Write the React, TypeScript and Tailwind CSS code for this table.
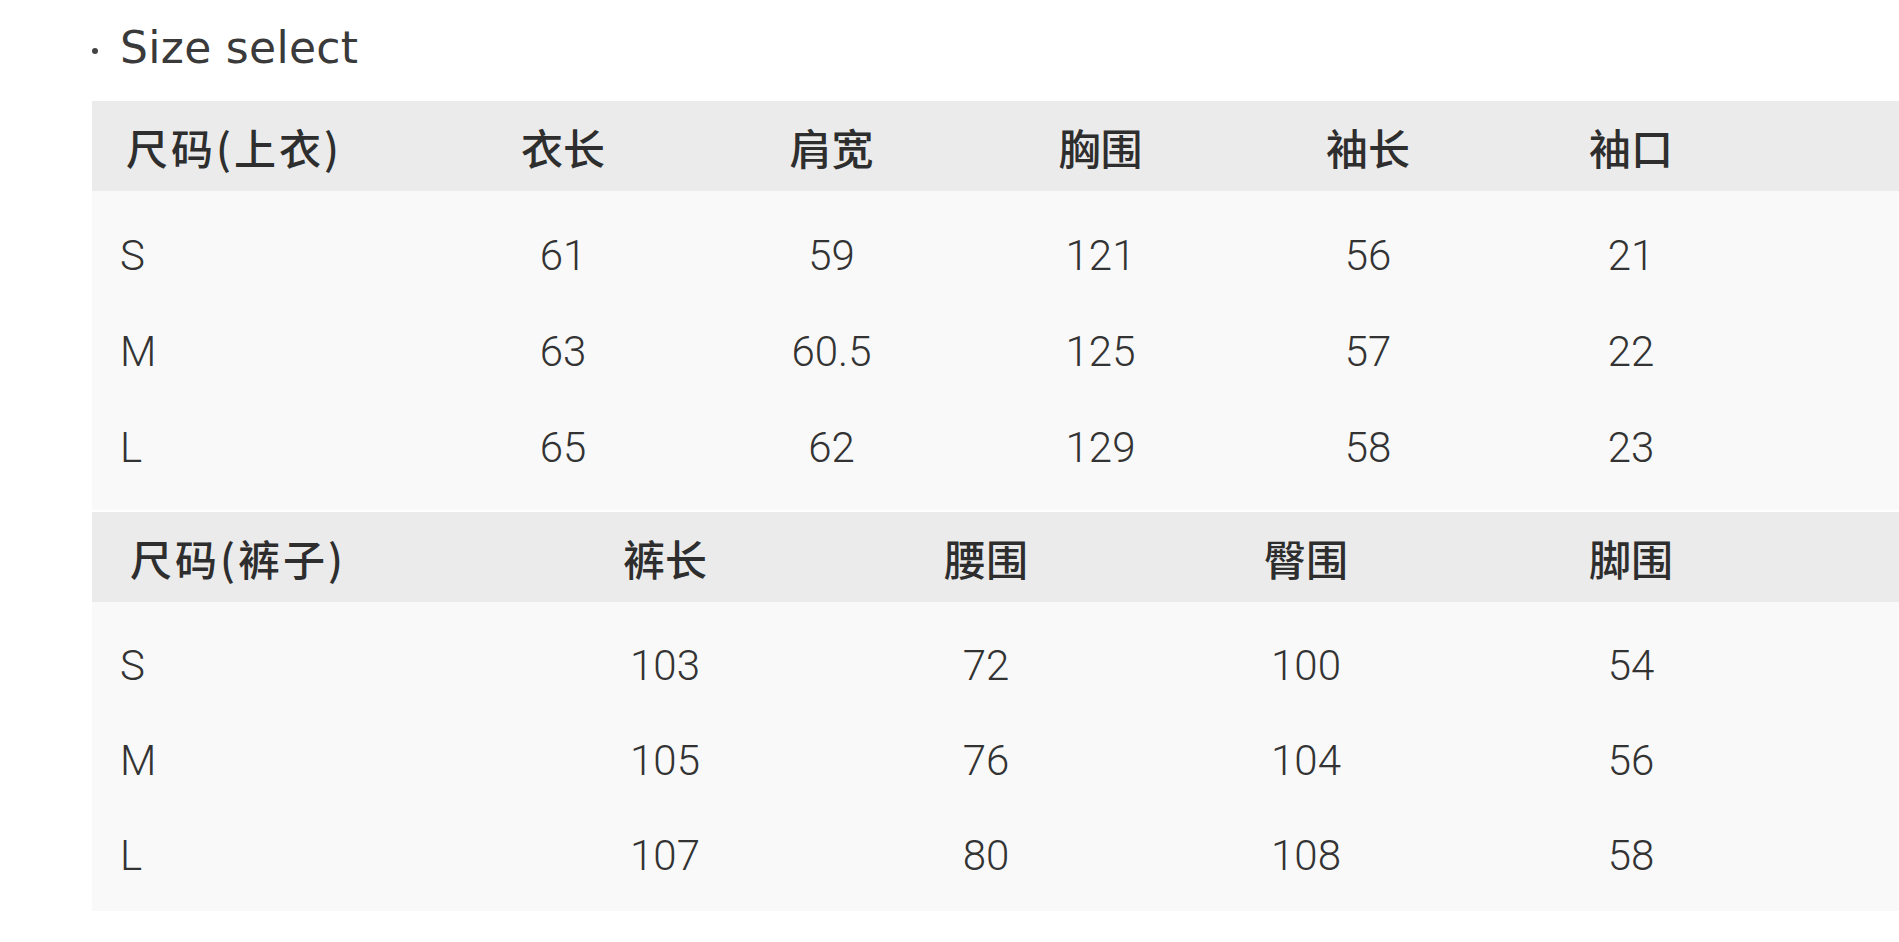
import React from "react";

const topHead = ["尺码(上衣)", "衣长", "肩宽", "胸围", "袖长", "袖口"];
const topRows = [
  ["S", "61", "59", "121", "56", "21"],
  ["M", "63", "60.5", "125", "57", "22"],
  ["L", "65", "62", "129", "58", "23"],
];
const botHead = ["尺码(裤子)", "裤长", "腰围", "臀围", "脚围"];
const botRows = [
  ["S", "103", "72", "100", "54"],
  ["M", "105", "76", "104", "56"],
  ["L", "107", "80", "108", "58"],
];

const cjk = { fontFamily: '"Noto Sans CJK SC", "Noto Sans", sans-serif' };
const num = { fontFamily: 'Roboto, "Noto Sans", sans-serif' };

export default function App() {
  return (
    <div className="w-[1899px] h-[942px] bg-white overflow-hidden pl-[92px]">
      <div
        className="flex items-center h-[52px] mt-[22px] text-[44px] leading-[52px] text-[#3a3a3a]"
        style={{ fontFamily: '"DejaVu Sans", sans-serif' }}
      >
        <span className="w-[6px] h-[6px] rounded-full bg-[#444] mr-[22px] mt-[6px]" />
        <span className="tracking-[0.3px]">Size select</span>
      </div>

      <div className="mt-[27px]">
        <div
          className="grid grid-cols-[337px_268px_269px_269px_266px_260px_1fr] h-[90px] items-center bg-[#ebebeb] text-[42px] text-[#2e2e2e] font-medium"
          style={cjk}
        >
          {topHead.map((h, i) => (
            <div key={i} className={i === 0 ? "pl-[34px] tracking-[3px]" : "text-center"}>
              {h}
            </div>
          ))}
          <div />
        </div>
        <div className="bg-[#f9f9f9] pt-[16px] pb-[15px]">
          {topRows.map((r, ri) => (
            <div
              key={ri}
              className="grid grid-cols-[337px_268px_269px_269px_266px_260px_1fr] h-[96px] items-center text-[42px] font-light text-[#333]"
              style={num}
            >
              {r.map((c, i) => (
                <div key={i} className={i === 0 ? "pl-[28px]" : "text-center"}>
                  {c}
                </div>
              ))}
              <div />
            </div>
          ))}
        </div>
      </div>

      <div className="mt-[2px]">
        <div
          className="grid grid-cols-[412px_322px_320px_320px_330px_1fr] h-[90px] items-center bg-[#ebebeb] text-[42px] text-[#2e2e2e] font-medium"
          style={cjk}
        >
          {botHead.map((h, i) => (
            <div key={i} className={i === 0 ? "pl-[38px] tracking-[3px]" : "text-center"}>
              {h}
            </div>
          ))}
          <div />
        </div>
        <div className="bg-[#f9f9f9] pt-[16px] pb-[8px]">
          {botRows.map((r, ri) => (
            <div
              key={ri}
              className="grid grid-cols-[412px_322px_320px_320px_330px_1fr] h-[95px] items-center text-[42px] font-light text-[#333]"
              style={num}
            >
              {r.map((c, i) => (
                <div key={i} className={i === 0 ? "pl-[28px]" : "text-center"}>
                  {c}
                </div>
              ))}
              <div />
            </div>
          ))}
        </div>
      </div>
    </div>
  );
}
